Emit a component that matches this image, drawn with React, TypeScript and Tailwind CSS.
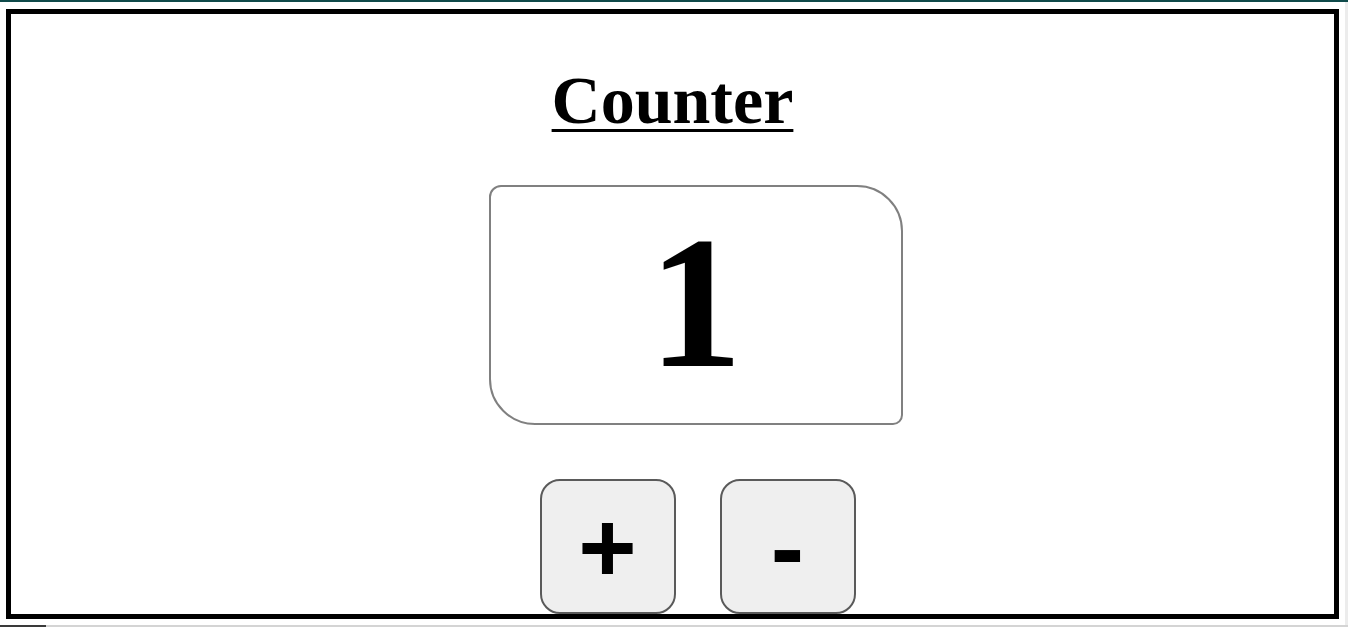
import React, { useState } from 'react';

export default function App() {
  const [count, setCount] = useState(1);

  return (
    <div className="relative h-[627px] w-[1348px] overflow-hidden bg-white">
      {/* window chrome: top accent line, right scroll strip, bottom edge */}
      <div className="h-[2px] bg-[#0f4a4a]" />
      <div className="absolute right-0 top-[2px] bottom-0 w-[3px] bg-[#ececec]" />
      <div className="absolute bottom-0 left-0 right-0 flex h-[2px]">
        <div className="w-[46px] bg-[#3a3a3a]" />
        <div className="flex-1 bg-[#d4d4d4]" />
      </div>

      {/* Counter card */}
      <div className="ml-[6px] mt-[7px] flex h-[610px] w-[1333px] flex-col items-center border-[5px] border-black">
        <h1
          className="mt-[52px] text-[68px] font-bold leading-none text-black underline decoration-[3px] underline-offset-[6px]"
          style={{ fontFamily: '"Liberation Serif", "Times New Roman", serif' }}
        >
          Counter
        </h1>

        <div className="ml-[46px] mt-[51px] flex flex-col items-center">
          <div className="flex h-[240px] w-[414px] items-center justify-center rounded-tl-[12px] rounded-tr-[46px] rounded-br-[10px] rounded-bl-[46px] border-2 border-[#808080]">
            <span
              className="mb-[4px] text-[188px] font-bold leading-none text-black"
              style={{ fontFamily: '"Liberation Serif", "Times New Roman", serif' }}
            >
              {count}
            </span>
          </div>

          <div className="ml-[4px] mt-[54px] flex gap-[44px]">
            <button
              onClick={() => setCount(count + 1)}
              className="flex h-[135px] w-[136px] items-center justify-center rounded-[20px] border-2 border-[#5a5a5a] bg-[#efefef] text-[100px] font-bold leading-none text-black"
              style={{ fontFamily: '"Liberation Sans", Arial, sans-serif' }}
            >
              +
            </button>
            <button
              onClick={() => setCount(count - 1)}
              className="flex h-[135px] w-[136px] items-center justify-center rounded-[20px] border-2 border-[#5a5a5a] bg-[#efefef] text-[100px] font-bold leading-none text-black"
              style={{ fontFamily: '"Liberation Sans", Arial, sans-serif' }}
            >
              -
            </button>
          </div>
        </div>
      </div>
    </div>
  );
}
